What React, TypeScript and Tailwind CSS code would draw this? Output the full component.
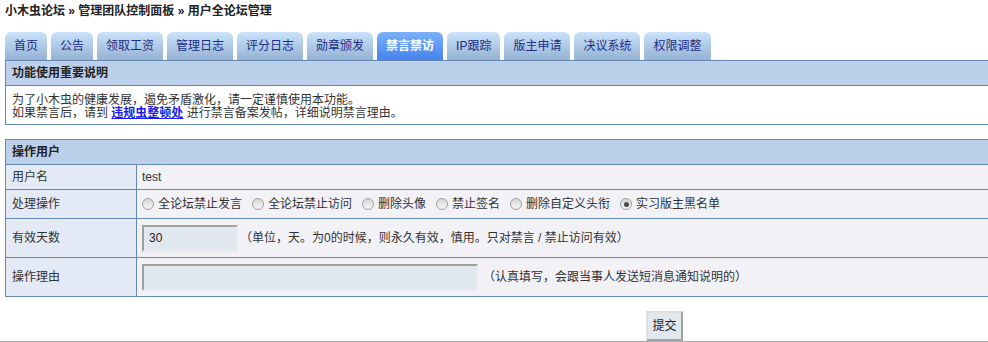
import * as React from "react";

const tabs = [
  "首页",
  "公告",
  "领取工资",
  "管理日志",
  "评分日志",
  "勋章颁发",
  "禁言禁访",
  "IP跟踪",
  "版主申请",
  "决议系统",
  "权限调整",
];

const actions = [
  "全论坛禁止发言",
  "全论坛禁止访问",
  "删除头像",
  "禁止签名",
  "删除自定义头衔",
  "实习版主黑名单",
];

function Radio({ checked }: { checked?: boolean }) {
  return (
    <span className="w-[12px] h-[12px] rounded-full border border-[#a3a3a3] bg-gradient-to-b from-[#d6d6d6] to-[#f6f6f6] flex items-center justify-center mr-[4px] shrink-0">
      {checked && <span className="w-[5px] h-[5px] rounded-full bg-[#4a4a4a]" />}
    </span>
  );
}

function Row({ label, h, children }: { label: string; h: string; children: React.ReactNode }) {
  return (
    <div className={`flex border-b border-[#6589b3] ${h}`}>
      <div className="w-[131px] shrink-0 bg-[#e3eaf5] border-r border-[#6589b3] pl-[6px] flex items-center">
        {label}
      </div>
      <div className="flex-1 bg-[#f1f1f6] pl-[5px] flex items-center">{children}</div>
    </div>
  );
}

export default function App() {
  const [action, setAction] = React.useState(5);

  return (
    <div className="w-[988px] h-[342px] overflow-hidden bg-white text-[12px] text-[#333] [font-family:'Liberation_Sans','Noto_Sans_CJK_SC',sans-serif]">
      <div className="w-[1000px] pl-[5px]">
        <div className="h-[32px] pt-[4px] leading-[14px] font-bold text-[#222]">
          小木虫论坛 » 管理团队控制面板 » 用户全论坛管理
        </div>

        <div className="flex gap-[4px] h-[28px]">
          {tabs.map((t) =>
            t === "禁言禁访" ? (
              <div
                key={t}
                className="px-[9px] rounded-t-[6px] bg-gradient-to-b from-[#7cb0f8] to-[#4583ef] text-white font-bold flex items-center"
              >
                {t}
              </div>
            ) : (
              <div
                key={t}
                className="px-[9px] rounded-t-[6px] bg-gradient-to-b from-[#cbe3fb] to-[#95b2d3] text-[#1c2d84] flex items-center"
              >
                {t}
              </div>
            )
          )}
        </div>

        <div className="border-t border-l border-[#6589b3]">
          <div className="h-[25px] bg-[#bccfeb] border-b border-[#6589b3] pl-[6px] flex items-center font-bold text-[#222]">
            功能使用重要说明
          </div>
          <div className="h-[39px] border-b border-[#6589b3] pl-[6px] pt-[8px] leading-[13px]">
            <div>为了小木虫的健康发展，遏免矛盾激化，请一定谨慎使用本功能。</div>
            <div>
              如果禁言后，请到{" "}
              <a href="#" className="text-[#1a1aee] font-bold underline">
                违规虫整顿处
              </a>{" "}
              进行禁言备案发帖，详细说明禁言理由。
            </div>
          </div>
        </div>

        <div className="mt-[14px] border-t border-l border-[#6589b3]">
          <div className="h-[25px] bg-[#bccfeb] border-b border-[#6589b3] pl-[6px] flex items-center font-bold text-[#222]">
            操作用户
          </div>
          <Row label="用户名" h="h-[25px]">
            test
          </Row>
          <Row label="处理操作" h="h-[29px]">
            <div className="flex items-center gap-[10px]">
              {actions.map((a, i) => (
                <label key={a} className="flex items-center cursor-pointer" onClick={() => setAction(i)}>
                  <Radio checked={action === i} />
                  {a}
                </label>
              ))}
            </div>
          </Row>
          <Row label="有效天数" h="h-[39px]">
            <div className="w-[96px] h-[27px] bg-[#e2e8f0] border-2 border-t-[#a0a0a0] border-l-[#a0a0a0] border-r-[#e6ebf1] border-b-[#e6ebf1] pl-[5px] flex items-center text-[#222]">
              30
            </div>
            <span className="ml-[2px]">（单位，天。为0的时候，则永久有效，慎用。只对禁言 / 禁止访问有效）</span>
          </Row>
          <Row label="操作理由" h="h-[39px]">
            <div className="w-[336px] h-[27px] bg-[#e2e8f0] border-2 border-t-[#a0a0a0] border-l-[#a0a0a0] border-r-[#e6ebf1] border-b-[#e6ebf1]" />
            <span className="ml-[5px]">（认真填写，会跟当事人发送短消息通知说明的）</span>
          </Row>
        </div>

        <div className="mt-[14px] h-[30px] pl-[641px]">
          <button className="w-[37px] h-[30px] bg-[#e2e8f0] border-2 border-t-[#dedede] border-l-[#dedede] border-r-[#a3a3a3] border-b-[#a3a3a3] text-[#222] text-[12px]">
            提交
          </button>
        </div>
      </div>
      <div className="h-px bg-[#a8a8a8]" />
    </div>
  );
}
